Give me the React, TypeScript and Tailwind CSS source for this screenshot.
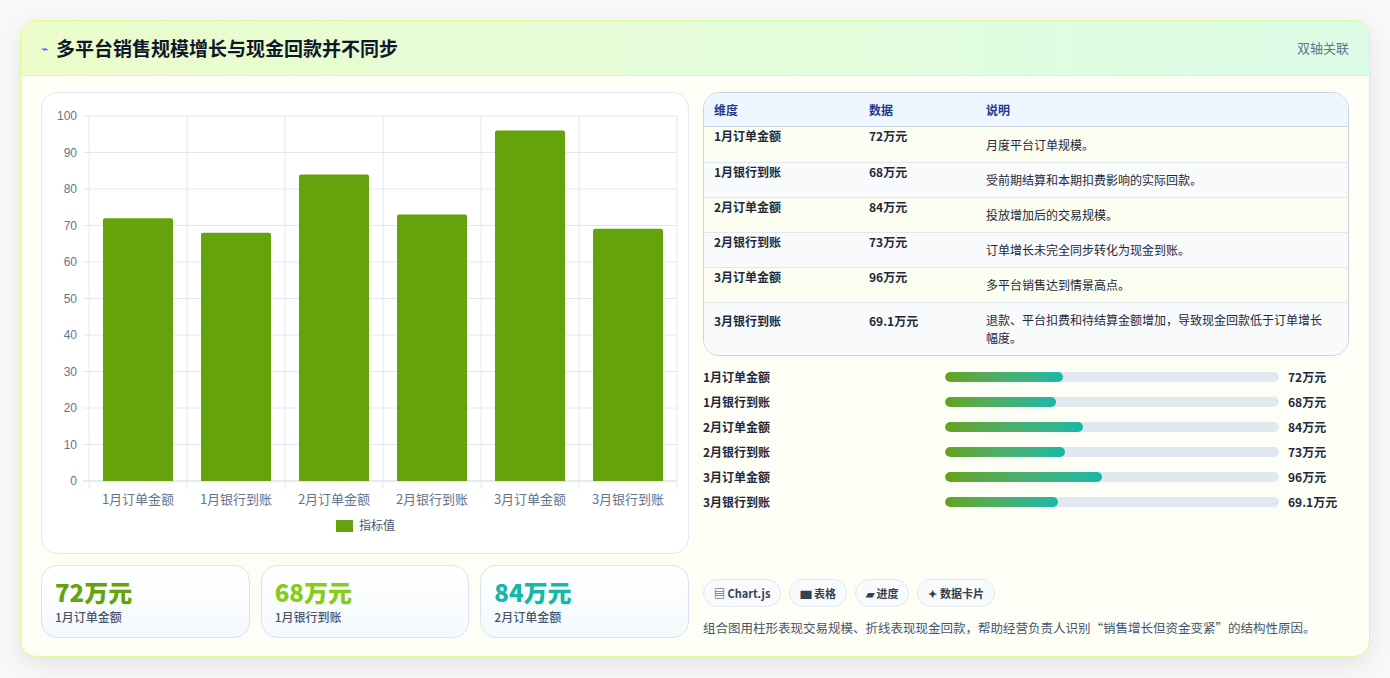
const rows = [
  { name: "1月订单金额", value: 72, text: "72万元", note: "月度平台订单规模。" },
  { name: "1月银行到账", value: 68, text: "68万元", note: "受前期结算和本期扣费影响的实际回款。" },
  { name: "2月订单金额", value: 84, text: "84万元", note: "投放增加后的交易规模。" },
  { name: "2月银行到账", value: 73, text: "73万元", note: "订单增长未完全同步转化为现金到账。" },
  { name: "3月订单金额", value: 96, text: "96万元", note: "多平台销售达到情景高点。" },
  { name: "3月银行到账", value: 69.1, text: "69.1万元", note: "退款、平台扣费和待结算金额增加，导致现金回款低于订单增长幅度。" },
];

const font = { fontFamily: '"Noto Sans CJK SC", "Noto Sans", sans-serif' };

function BarChart() {
  const left = 47, top = 23, right = 635, bottom = 388;
  const h = bottom - top;
  const step = (right - left) / rows.length;
  const ticks = [0, 10, 20, 30, 40, 50, 60, 70, 80, 90, 100];
  return (
    <svg width="646" height="460" className="block">
      {ticks.map((t) => {
        const y = bottom - (t / 100) * h;
        return (
          <g key={t}>
            <line x1={left - 6} x2={right} y1={y} y2={y} stroke={t === 0 ? "#cbd5e1" : "#e2e8f0"} />
            <text x={left - 12} y={y + 4} textAnchor="end" fontSize="12" fill="#64748b" fontFamily="Liberation Sans, sans-serif">{t}</text>
          </g>
        );
      })}
      {rows.map((_, i) => (
        <line key={i} x1={left + i * step} x2={left + i * step} y1={top} y2={bottom + 8} stroke="#e2e8f0" />
      ))}
      <line x1={right} x2={right} y1={top} y2={bottom + 8} stroke="#e2e8f0" />
      {rows.map((r, i) => {
        const y = bottom - (r.value / 100) * h;
        const x = left + i * step + 14;
        return (
          <g key={r.name}>
            <path d={`M${x} ${bottom} V${y + 2} Q${x} ${y} ${x + 2} ${y} H${x + 68} Q${x + 70} ${y} ${x + 70} ${y + 2} V${bottom} Z`} fill="#65a30d" />
            <text x={x + 35} y={bottom + 23} textAnchor="middle" fontSize="13" fill="#64748b" style={font}>{r.name}</text>
          </g>
        );
      })}
      <rect x="294" y="427" width="17" height="12" fill="#65a30d" />
      <text x="317" y="437" fontSize="12" fill="#475569" style={font}>指标值</text>
    </svg>
  );
}

export default function App() {
  const stats = [
    { v: "72万元", l: "1月订单金额", c: "text-[#65a30d]" },
    { v: "68万元", l: "1月银行到账", c: "text-[#84cc16]" },
    { v: "84万元", l: "2月订单金额", c: "text-[#14b8a6]" },
  ];
  return (
    <div className="min-h-[678px] bg-[#f7f8f7] px-5 pt-5" style={font}>
      <div className="rounded-2xl border border-[#d9f99d] bg-[#fdfff7] shadow-[0_8px_24px_rgba(0,0,0,0.08)] overflow-hidden">
        <div className="h-[55px] flex items-center justify-between px-5 bg-gradient-to-r from-[#ecfccb] to-[#dcfce7] border-b border-[#e2e8f0]">
          <div className="flex items-center gap-2">
            <span className="text-[#2563eb] text-xs">⌁</span>
            <h1 className="text-[19px] font-bold text-[#0f172a]">多平台销售规模增长与现金回款并不同步</h1>
          </div>
          <span className="text-[13px] text-[#64748b]">双轴关联</span>
        </div>
        <div className="flex gap-[14px] px-5 pt-4 pb-[18px]">
          <div className="w-[648px] flex flex-col gap-[11px]">
            <div className="h-[462px] rounded-2xl border border-[#e2e8f0] bg-white">
              <BarChart />
            </div>
            <div className="grid grid-cols-3 gap-[11px]">
              {stats.map((s) => (
                <div key={s.l} className="h-[73px] rounded-2xl border border-[#dbe4ef] bg-gradient-to-b from-white to-[#f5f9fc] px-[13px] pt-[10px]">
                  <div className={`text-[24px] font-black leading-8 ${s.c}`}>{s.v}</div>
                  <div className="text-xs font-medium text-[#475569] mt-[1px]">{s.l}</div>
                </div>
              ))}
            </div>
          </div>
          <div className="flex-1 flex flex-col">
            <div className="rounded-2xl border border-[#cbd5e1] overflow-hidden bg-white text-xs">
              <div className="flex h-[34px] items-center bg-[#eef6ff] text-[#1e3a8a] font-semibold border-b border-[#cbd5e1] px-[10px]">
                <div className="w-[155px]">维度</div>
                <div className="w-[117px]">数据</div>
                <div className="flex-1">说明</div>
              </div>
              {rows.map((r, i) => (
                <div key={r.name} className={`flex items-center px-[10px] text-[#1e293b] ${i === rows.length - 1 ? "py-[8px] leading-[18px]" : "h-[35px]"} ${i % 2 === 0 ? "bg-[#fafdf0]" : "bg-[#f8fafc]"} ${i > 0 ? "border-t border-[#e2e8f0]" : ""}`}>
                  <div className="w-[155px] font-semibold self-start pt-[1px]">{r.name}</div>
                  <div className="w-[117px] font-semibold self-start pt-[1px]">{r.text}</div>
                  <div className="flex-1 pr-4">{r.note}</div>
                </div>
              ))}
            </div>
            <div className="flex flex-col gap-[7px] mt-[12px]">
              {rows.map((r) => (
                <div key={r.name} className="flex items-center h-[18px] text-xs font-semibold text-[#1e293b]">
                  <div className="w-[242px]">{r.name}</div>
                  <div className="w-[334px] h-[10px] rounded-full bg-[#e2e8f0] overflow-hidden">
                    <div className="h-full rounded-full bg-gradient-to-r from-[#65a30d] to-[#14b8a6]" style={{ width: `${(r.value / 204) * 100}%` }} />
                  </div>
                  <div className="ml-[9px]">{r.text}</div>
                </div>
              ))}
            </div>
            <div className="flex gap-2 mt-auto">
              {["▤ Chart.js", "▆ 表格", "▰ 进度", "✦ 数据卡片"].map((c) => (
                <span key={c} className="h-[28px] px-[10px] flex items-center rounded-full border border-[#e2e8f0] bg-[#f8fafc] text-[11px] font-semibold text-[#334155]">{c}</span>
              ))}
            </div>
            <p className="mt-[12px] text-[12.5px] text-[#475569]">组合图用柱形表现交易规模、折线表现现金回款，帮助经营负责人识别“销售增长但资金变紧”的结构性原因。</p>
          </div>
        </div>
      </div>
    </div>
  );
}
